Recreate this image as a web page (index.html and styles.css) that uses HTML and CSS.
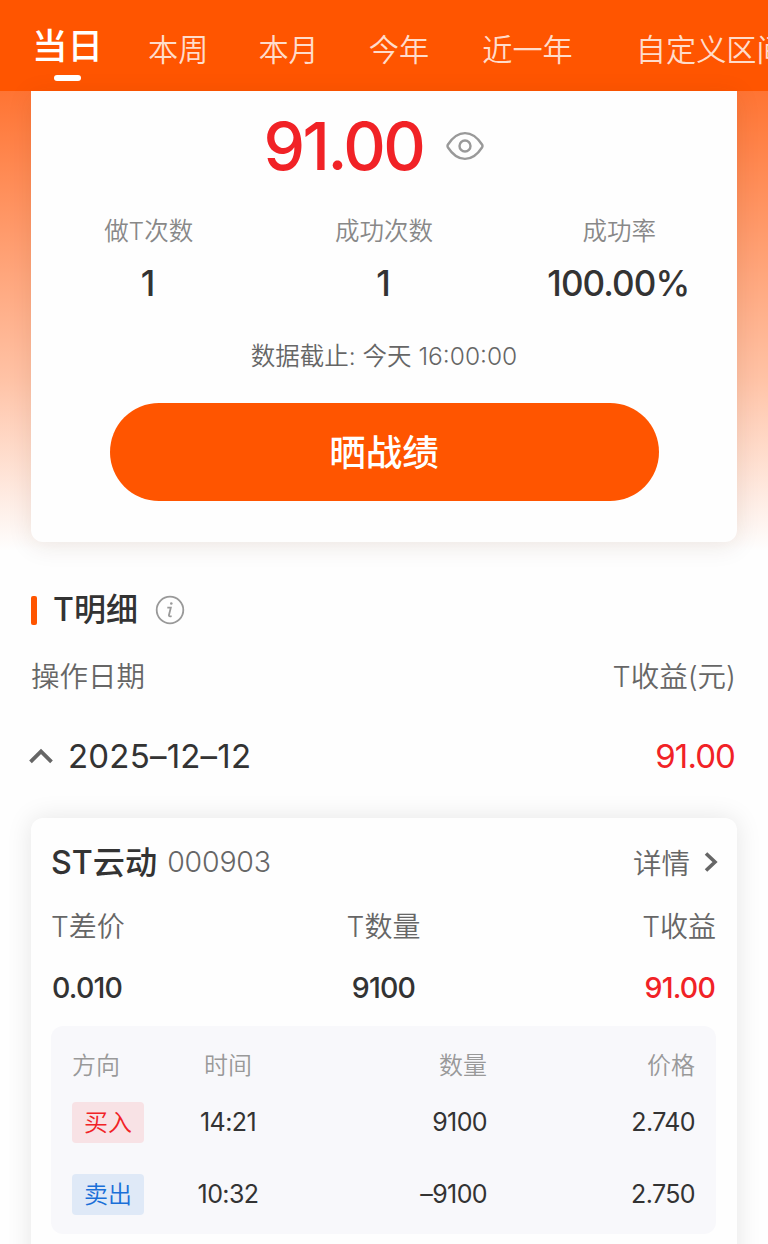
FILE: index.html
```html
<!DOCTYPE html>
<html lang="zh-CN">
<head>
    <meta charset="UTF-8">
    <meta name="viewport" content="width=device-width, initial-scale=1.0">
    <title>做T战绩</title>
    <link rel="stylesheet" href="styles.css">
</head>
<body>
    <nav class="tabs">
        <a class="tab active">当日</a>
        <a class="tab">本周</a>
        <a class="tab">本月</a>
        <a class="tab">今年</a>
        <a class="tab year">近一年</a>
        <a class="tab custom">自定义区间</a>
    </nav>

    <div class="hero">
        <div class="summary">
            <div class="total">
                <span class="total-num">91.00</span>
                <svg class="eye" width="38" height="30" viewBox="0 0 38 30" fill="none" stroke="#999" stroke-width="2.4">
                    <path d="M2 13.500C6.500 6.500 12 2.100 19 2.100S31.500 6.500 36 13.500Q37 15 36 16.500C31.500 23.500 26 27.900 19 27.900S6.500 23.500 2 16.500Q1 15 2 13.500Z"/>
                    <circle cx="19" cy="15" r="5.500"/>
                </svg>
            </div>
            <div class="stats">
                <div class="stat">
                    <div class="stat-label">做T次数</div>
                    <div class="stat-value">1</div>
                </div>
                <div class="stat">
                    <div class="stat-label">成功次数</div>
                    <div class="stat-value">1</div>
                </div>
                <div class="stat">
                    <div class="stat-label">成功率</div>
                    <div class="stat-value">100.00%</div>
                </div>
            </div>
            <div class="deadline">数据截止: 今天 16:00:00</div>
            <button class="share">晒战绩</button>
        </div>
    </div>

    <div class="section-title">
        <span class="bar"></span>
        <h2>T明细</h2>
        <svg width="30" height="30" viewBox="0 0 30 30" fill="none" stroke="#999" stroke-width="1.800">
            <circle cx="15" cy="15" r="13.300"/>
            <path d="M12.300 12.600H15.800L13.900 20.300Q13.600 21.800 16.600 21.100"/>
            <circle cx="16.300" cy="8.500" r="1.300" fill="#999" stroke="none"/>
        </svg>
    </div>

    <div class="list-head">
        <span>操作日期</span>
        <span>T收益(元)</span>
    </div>

    <div class="day">
        <svg width="24" height="16" viewBox="0 0 24 16" fill="none" stroke="#666" stroke-width="3.800">
            <path d="M1.500 13.800L12 3.500L22.500 13.800"/>
        </svg>
        <span class="date">2025–12–12</span>
        <span class="day-profit red">91.00</span>
    </div>

    <div class="stock">
        <div class="stock-head">
            <span class="name">ST云动</span>
            <span class="code">000903</span>
            <span class="more">详情</span>
            <svg width="14" height="22" viewBox="0 0 14 22" fill="none" stroke="#666" stroke-width="3.600">
                <path d="M2 2.500L11 11L2 19.500"/>
            </svg>
        </div>
        <div class="figures labels">
            <span>T差价</span>
            <span>T数量</span>
            <span>T收益</span>
        </div>
        <div class="figures values">
            <span>0.010</span>
            <span>9100</span>
            <span class="red">91.00</span>
        </div>
        <div class="trades">
            <div class="trade trade-head">
                <span>方向</span>
                <span>时间</span>
                <span>数量</span>
                <span>价格</span>
            </div>
            <div class="trade">
                <span class="tag buy">买入</span>
                <span>14:21</span>
                <span>9100</span>
                <span>2.740</span>
            </div>
            <div class="trade">
                <span class="tag sell">卖出</span>
                <span>10:32</span>
                <span>–9100</span>
                <span>2.750</span>
            </div>
        </div>
    </div>
</body>
</html>
```
FILE: styles.css
```css
* {
    box-sizing: border-box;
}
body {
    margin: 0;
    height: 1244px;
    overflow: hidden;
    background: #fefefe;
    color: #333;
    font-family: Inter, "Noto Sans CJK SC", sans-serif;
}
.red {
    color: #f12226;
}

/* 顶部时间切换 */
.tabs {
    display: flex;
    height: 91px;
    padding: 0 0 0 32px;
    background: #ff5500;
    overflow: hidden;
    white-space: nowrap;
}
.tab {
    flex: none;
    margin-right: 50px;
    font-size: 30.200px;
    font-weight: 350;
    line-height: 101px;
    color: #ffdccb;
}
.tab.active {
    display: flex;
    flex-direction: column;
    align-items: center;
    margin-right: 45px;
    font-size: 35.500px;
    font-weight: 500;
    line-height: 93px;
    color: #fff;
}
.tab.active::after {
    content: "";
    width: 27px;
    height: 6px;
    margin-top: -18px;
    border-radius: 3px;
    background: #fff;
}
.tab.year {
    margin-left: 3px;
    margin-right: 63px;
}

/* 汇总卡片 */
.hero {
    height: 469px;
    padding: 0 31px;
    background: linear-gradient(#ff7433, #ffc2a5 61%, #fefefe 98%);
}
.summary {
    display: flex;
    flex-direction: column;
    align-items: center;
    height: 451px;
    border-radius: 0 0 12px 12px;
    background: #fefefe;
    box-shadow: 0 4px 24px rgba(80, 40, 20, 0.1);
}
.total {
    display: flex;
    align-items: center;
    gap: 23px;
    height: 110px;
    margin-left: -20px;
}
.total-num {
    font-size: 66px;
    font-weight: 550;
    letter-spacing: -2.500px;
    color: #f12226;
}
.stats {
    display: grid;
    grid-template-columns: repeat(3, 1fr);
    width: 100%;
    text-align: center;
}
.stat-label {
    height: 60px;
    font-size: 24.500px;
    font-weight: 350;
    line-height: 60px;
    color: #888;
}
.stat-value {
    margin-left: -2px;
    font-size: 35px;
    font-weight: 550;
    line-height: 44px;
    letter-spacing: -0.900px;
}
.deadline {
    margin-top: 35px;
    font-size: 24.500px;
    font-weight: 350;
    line-height: 32px;
    color: #666;
}
.share {
    width: 549px;
    height: 98px;
    margin-top: 31px;
    padding: 0 0 3px;
    border: none;
    border-radius: 49px;
    background: #ff5500;
    color: #fff;
    font-family: inherit;
    font-size: 36.500px;
    font-weight: 500;
}

/* T明细 */
.section-title {
    display: flex;
    align-items: center;
    height: 50px;
    margin-top: 25px;
    padding-left: 31px;
}
.section-title .bar {
    width: 6px;
    height: 29px;
    margin-right: 16px;
    border-radius: 2px;
    background: #ff5500;
}
.section-title h2 {
    margin: -6px 17px 0 0;
    font-size: 32px;
    font-weight: 500;
}
.list-head {
    display: flex;
    justify-content: space-between;
    height: 80px;
    padding: 0 32px 0 31px;
    font-size: 28.500px;
    font-weight: 350;
    line-height: 83px;
    color: #666;
}
.day {
    display: flex;
    align-items: center;
    height: 82px;
    padding: 0 33px 0 29px;
    font-size: 33px;
}
.day .date {
    flex: 1;
    margin-left: 15px;
    letter-spacing: 0.200px;
}
.day-profit {
    letter-spacing: -0.900px;
}

/* 个股卡片 */
.stock {
    height: 470px;
    margin: 21px 31px 0;
    padding: 18px 21px 0 20px;
    border-radius: 12px;
    background: #fefefe;
    box-shadow: 0 0 26px rgba(0, 0, 0, 0.1);
}
.stock-head {
    display: flex;
    align-items: center;
    height: 52px;
}
.name {
    margin-top: -5px;
    font-size: 32.200px;
    font-weight: 500;
}
.code {
    flex: 1;
    margin-top: -1px;
    margin-left: 10px;
    font-size: 28.500px;
    font-weight: 350;
    letter-spacing: -0.200px;
    color: #666;
}
.more {
    margin-top: -2px;
    margin-right: 14px;
    font-size: 28.500px;
    font-weight: 350;
    color: #666;
}
.stock-head svg {
    margin-right: -2px;
}
.figures {
    display: grid;
    grid-template-columns: repeat(3, 1fr);
}
.figures span:nth-child(2) {
    text-align: center;
}
.figures span:nth-child(3) {
    text-align: right;
}
.labels {
    font-size: 28px;
    font-weight: 350;
    line-height: 78px;
    color: #666;
}
.values {
    padding: 0 1px;
    font-size: 28.500px;
    font-weight: 500;
    line-height: 44px;
    letter-spacing: -0.800px;
}
.trades {
    height: 208px;
    margin-top: 16px;
    padding: 2px 21px 0;
    border-radius: 12px;
    background: #f8f8fb;
}
.trade {
    display: grid;
    grid-template-columns: 86px 140px 1fr 208px;
    align-items: center;
    height: 72px;
    font-size: 25px;
    letter-spacing: -0.600px;
}
.trade-head {
    padding-bottom: 1px;
    font-size: 24px;
    font-weight: 350;
    letter-spacing: 0;
    color: #999;
}
.trade-head + .trade {
    margin-top: -14px;
}
.trade span:nth-child(2) {
    text-align: center;
}
.trade span:nth-child(n+3) {
    text-align: right;
}
.tag {
    width: 72px;
    height: 41px;
    border-radius: 4px;
    font-size: 24px;
    font-weight: 350;
    line-height: 41px;
    letter-spacing: 0;
    text-align: center;
}
.buy {
    background: #f8e2e5;
    color: #f12226;
}
.sell {
    background: #dfe9f7;
    color: #1a6fd8;
}
```
